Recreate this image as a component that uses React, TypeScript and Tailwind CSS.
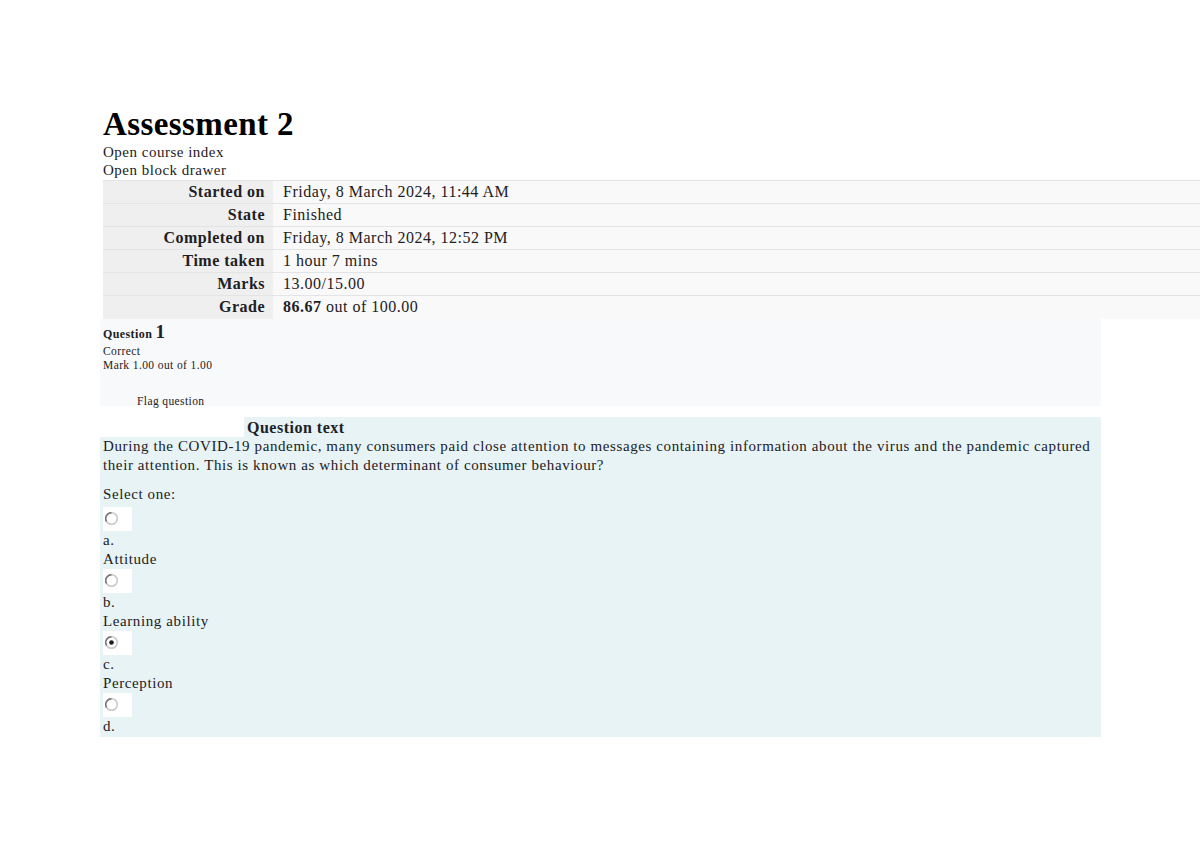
import React from "react";

const summary = [
  { label: "Started on", value: "Friday, 8 March 2024, 11:44 AM" },
  { label: "State", value: "Finished" },
  { label: "Completed on", value: "Friday, 8 March 2024, 12:52 PM" },
  { label: "Time taken", value: "1 hour 7 mins" },
  { label: "Marks", value: "13.00/15.00" },
];

const options = [
  { letter: "a.", text: "Attitude", checked: false },
  { letter: "b.", text: "Learning ability", checked: false },
  { letter: "c.", text: "Perception", checked: true },
];

function Radio({ checked }: { checked: boolean }) {
  return (
    <div className="h-[24px] w-[29px] bg-white pl-[1px] pt-[4px]">
      <svg width="15" height="15" viewBox="0 0 15 15">
        <circle cx="7.5" cy="7.5" r="5.8" fill="white" stroke="#c8c8c8" strokeWidth="1.5" />
        <path d="M2.6 10.5 A5.8 5.8 0 0 1 7.5 1.7" fill="none" stroke="#777" strokeWidth="1.5" />
        {checked && <circle cx="7.5" cy="7.5" r="2.3" fill="#1a1a1a" />}
      </svg>
    </div>
  );
}

export default function App() {
  return (
    <div
      className="w-[1200px] h-[849px] overflow-hidden bg-white text-[#1d2125]"
      style={{ fontFamily: '"Liberation Serif", "Times New Roman", serif' }}
    >
      <div className="pl-[100px] pt-[106px]">
        <h1 className="ml-[3px] text-[33px] font-bold leading-[37px] tracking-[0.4px] text-black">
          Assessment 2
        </h1>
        <div className="ml-[3px] text-[15px] leading-[18px] tracking-[0.5px]">
          <div>Open course index</div>
          <div>Open block drawer</div>
        </div>

        {/* Attempt summary */}
        <table className="ml-[3px] mt-[1px] w-[1100px] border-collapse text-[16px] leading-[20px] tracking-[0.5px]">
          <tbody>
            {summary.map((row) => (
              <tr key={row.label} className="border-t border-[#e2e4e6]">
                <th className="w-[170px] bg-[#efefef] pr-[8px] text-right font-bold h-[23px]">
                  {row.label}
                </th>
                <td className="bg-[#f9f9f9] pl-[10px] text-left">{row.value}</td>
              </tr>
            ))}
            <tr className="border-t border-[#e2e4e6]">
              <th className="w-[170px] bg-[#efefef] pr-[8px] text-right font-bold h-[23px]">Grade</th>
              <td className="bg-[#f9f9f9] pl-[10px] text-left">
                <b>86.67</b> out of 100.00
              </td>
            </tr>
          </tbody>
        </table>

        {/* Question info */}
        <div className="w-[1001px] h-[87px] bg-[#f8f9fa] pl-[3px] pt-[3px] tracking-[0.4px]">
          <div className="leading-[20px]">
            <span className="text-[12px] font-bold">Question </span>
            <span className="text-[19px] font-bold">1</span>
          </div>
          <div className="text-[11.5px] leading-[14px]">Correct</div>
          <div className="text-[11.5px] leading-[14px]">Mark 1.00 out of 1.00</div>
          <div className="mt-[22px] pl-[34px] text-[11.5px] leading-[14px]">Flag question</div>
        </div>

        {/* Question content */}
        <div className="mt-[11px] w-[1001px] text-[15px] leading-[19px] tracking-[0.6px]">
          <div className="flex">
            <div className="w-[144px] bg-white" />
            <div className="h-[20px] flex-1 bg-[#e7f3f5] pl-[3px] text-[16px] leading-[21px] font-bold tracking-[0.5px]">
              Question text
            </div>
          </div>
          <div className="bg-[#e7f3f5] pl-[3px] pb-[1px]">
            <p className="pr-[8px]">
              During the COVID-19 pandemic, many consumers paid close attention to messages containing information about the virus and the pandemic captured their attention. This is known as which determinant of consumer behaviour?
            </p>
            <div className="mt-[10px] mb-[3px]">Select one:</div>
            {options.map((o) => (
              <div key={o.letter}>
                <Radio checked={o.checked} />
                <div>{o.letter}</div>
                <div>{o.text}</div>
              </div>
            ))}
            <Radio checked={false} />
            <div>d.</div>
          </div>
        </div>
      </div>
    </div>
  );
}
